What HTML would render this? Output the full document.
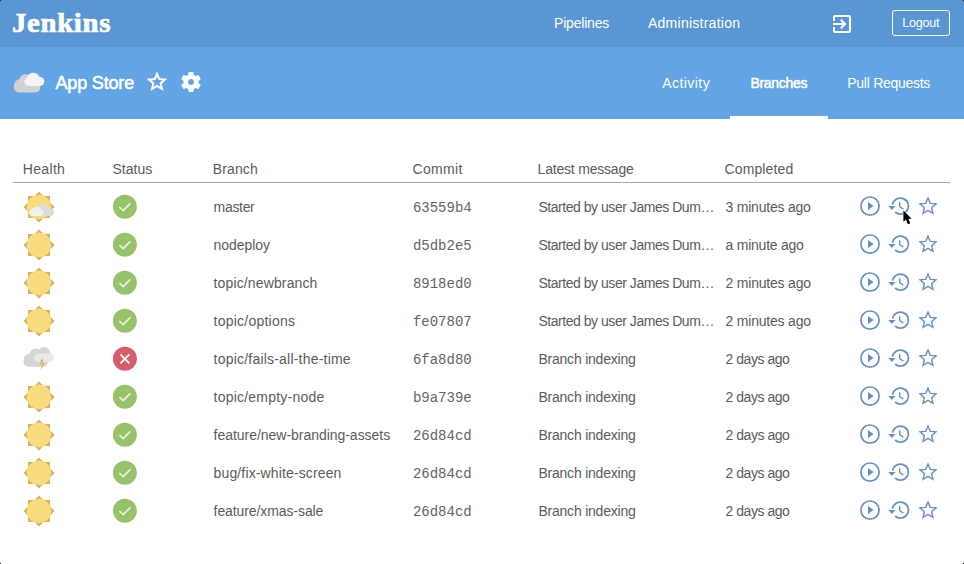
<!DOCTYPE html>
<html><head><meta charset="utf-8">
<style>
html,body{margin:0;padding:0;}
body{width:964px;height:564px;overflow:hidden;position:relative;background:#fff;font-family:"Liberation Sans",sans-serif;}
.t{position:absolute;white-space:nowrap;line-height:1;}
#top{position:absolute;left:0;top:0;width:964px;height:47px;background:#5a96d3;}
#sub{position:absolute;left:0;top:47px;width:964px;height:72px;background:#62a4e4;}
.w{color:#fff;}
.g{color:#5b5b5b;}
.m{color:#646464;}
svg{position:absolute;overflow:visible;}
</style></head><body>
<div id="top"></div>
<div id="sub"></div>
<div style="position:absolute;left:0;top:0;width:2px;height:2px;background:radial-gradient(circle at 100% 100%,rgba(0,0,0,0) 1.5px,#333 2px)"></div><div style="position:absolute;right:0;top:0;width:2px;height:2px;background:radial-gradient(circle at 0 100%,rgba(0,0,0,0) 1.5px,#333 2px)"></div><div style="position:absolute;left:0;bottom:0;width:2px;height:2px;background:radial-gradient(circle at 100% 0,rgba(0,0,0,0) 1.5px,#333 2px)"></div><div style="position:absolute;right:0;bottom:0;width:2px;height:2px;background:radial-gradient(circle at 0 0,rgba(0,0,0,0) 1.5px,#333 2px)"></div>
<div class="t w" style="left:11.80px;top:9.81px;font-size:26.5px;font-family:'Liberation Serif',serif;font-weight:bold;letter-spacing:0.7px;-webkit-text-stroke:0.7px #fff;transform:scaleX(1.08);transform-origin:0 0;">Jenkins</div>
<div class="t w" style="left:554.00px;top:15.95px;font-size:14px;letter-spacing:-0.2px;">Pipelines</div>
<div class="t w" style="left:648.00px;top:15.95px;font-size:14px;letter-spacing:0.25px;">Administration</div>
<div style="position:absolute;left:892px;top:10px;width:56px;height:24px;border:1px solid #fff;border-radius:3px;"></div>
<div class="t w" style="left:902.20px;top:16.62px;font-size:12.5px;letter-spacing:-0.2px;">Logout</div>
<svg style="left:830px;top:12px" width="24" height="24" viewBox="0 0 24 24"><path fill="#fff" d="M10.09 15.59L11.5 17l5-5-5-5-1.41 1.41L12.67 11H3v2h9.67l-2.58 2.59zM19 3H5c-1.11 0-2 .9-2 2v4h2V5h14v14H5v-4H3v4c0 1.1.89 2 2 2h14c1.1 0 2-.9 2-2V5c0-1.1-.9-2-2-2z"/></svg>
<div class="t w" style="left:55.50px;top:74.36px;font-size:18px;-webkit-text-stroke:0.55px #fff;letter-spacing:-0.169px;">App Store</div>
<svg style="left:0;top:0" width="964" height="564"><g transform="translate(157.0 81.8) scale(0.8)"><path d="M0 -10 L2.81 -3.38 L10 -2.76 L4.55 1.97 L6.18 9 L0 5.27 L-6.18 9 L-4.55 1.97 L-10 -2.76 L-2.81 -3.38 Z" fill="none" stroke="#fff" stroke-width="2.5" stroke-linejoin="miter" stroke-miterlimit="3"/></g></svg>
<svg style="left:178.8px;top:69.8px" width="24" height="24" viewBox="0 0 24 24"><path fill="#fff" fill-rule="evenodd" d="M19.43 12.98c.04-.32.07-.64.07-.98s-.03-.66-.07-.98l2.11-1.650c.19-.15.24-.42.12-.64l-2-3.46c-.12-.22-.39-.3-.61-.22l-2.49 1c-.52-.4-1.08-.73-1.69-.98l-.38-2.65C14.46 2.18 14.25 2 14 2h-4c-.25 0-.46.18-.49.42l-.38 2.65c-.61.25-1.17.59-1.690.98l-2.49-1c-.23-.09-.49 0-.61.22l-2 3.46c-.13.22-.07.49.12.64l2.11 1.65c-.04.32-.07.65-.07.98s.03.66.07.98l-2.11 1.65c-.19.15-.24.42-.12.64l2 3.46c.12.22.39.3.61.22l2.49-1c.52.4 1.08.73 1.69.98l.38 2.65c.03.24.24.42.49.42h4c.25 0 .46-.18.49-.42l.38-2.65c.61-.25 1.17-.59 1.69-.98l2.49 1c.23.09.49 0 .61-.22l2-3.46c.12-.22.07-.49-.12-.64l-2.11-1.65zM12 14.95a2.95 2.95 0 1 1 0-5.9a2.95 2.95 0 1 1 0 5.9z"/></svg>
<svg style="left:12px;top:70px" width="34" height="26" viewBox="0 0 34 26">
<g fill="#d2d2d2"><circle cx="8.5" cy="15.5" r="6.5"/><circle cx="13.5" cy="10.5" r="6.2"/><rect x="1.8" y="12" width="26.5" height="10.5" rx="5"/></g>
<g fill="#f4f4f4"><circle cx="21.3" cy="9.6" r="6.8"/><rect x="12.5" y="7" width="19.8" height="9" rx="4.5"/></g>
</svg>
<div class="t w" style="left:662.20px;top:76.15px;font-size:14px;letter-spacing:0.45px;">Activity</div>
<div class="t w" style="left:750.50px;top:76.15px;font-size:14px;-webkit-text-stroke:0.5px #fff;letter-spacing:-0.321px;">Branches</div>
<div class="t w" style="left:847.30px;top:76.15px;font-size:14px;letter-spacing:-0.28px;">Pull Requests</div>
<div style="position:absolute;left:730px;top:116px;width:98px;height:3px;background:#fff;"></div>
<div class="t g" style="left:22.70px;top:162.05px;font-size:14px;letter-spacing:0.35px;">Health</div>
<div class="t g" style="left:112.50px;top:162.05px;font-size:14px;letter-spacing:0px;">Status</div>
<div class="t g" style="left:212.70px;top:162.05px;font-size:14px;letter-spacing:0.15px;">Branch</div>
<div class="t g" style="left:412.60px;top:162.05px;font-size:14px;letter-spacing:0.3px;">Commit</div>
<div class="t g" style="left:537.60px;top:162.05px;font-size:14px;letter-spacing:-0.2px;">Latest message</div>
<div class="t g" style="left:724.50px;top:162.05px;font-size:14px;letter-spacing:0.12px;">Completed</div>
<div style="position:absolute;left:13px;top:181.5px;width:937px;height:1.5px;background:#a9a9a9;"></div>
<svg style="left:0;top:0" width="964" height="564"><g transform="translate(39.0 206.95)"><rect x="-11" y="-11" width="22" height="22" fill="#d7b25a"/><rect x="-11" y="-11" width="22" height="22" fill="#d7b25a" transform="rotate(45)"/><circle r="12.2" fill="#f8dc7d"/></g></svg>
<svg style="left:0;top:0" width="964" height="564"><g transform="translate(39.0 206.95)"><circle cx="5" cy="3.2" r="6" fill="#dedede"/><rect x="-9.5" y="1.2" width="24.5" height="7.8" rx="3.9" fill="#dadada"/><circle cx="-2" cy="4" r="4.5" fill="#efefef"/><rect x="-9.5" y="2" width="14" height="7" rx="3.5" fill="#f1f1f1"/></g></svg>
<svg style="left:0;top:0" width="964" height="564"><circle cx="124.9" cy="206.80" r="12" fill="#96c36a"/><path d="M119.40 207.00l3.8 3.6 7.2-7.2" fill="none" stroke="#f2f8e6" stroke-width="1.5"/></svg>
<div class="t g" style="left:213.60px;top:199.65px;font-size:14px;letter-spacing:-0.320px;">master</div>
<div class="t m" style="left:412.90px;top:201.17px;font-size:14px;font-family:'Liberation Mono',monospace;">63559b4</div>
<div class="t g" style="left:538.40px;top:199.65px;font-size:14px;letter-spacing:-0.460px;">Started by user James Dum…</div>
<div class="t g" style="left:725.50px;top:199.65px;font-size:14px;letter-spacing:-0.213px;">3 minutes ago</div>
<svg style="left:0;top:0" width="964" height="564"><g fill="none" stroke="#6590c4" stroke-width="1.7"><circle cx="870" cy="206.10" r="9.1"/></g><path d="M868 201.90v8.4l5.6-4.2z" fill="#6590c4"/><g transform="translate(900.5 206.10)" fill="none" stroke="#6590c4" stroke-width="1.7"><path d="M-7.9 -1.5A8 8 0 1 1 -5.4 5.9"/><path d="M-0.8 -3.8v4.2l3.6 2.6" stroke-width="1.4"/></g><path d="M888.40 205.90h7l-3.5 4.2z" fill="#6590c4"/></svg>
<svg style="left:0;top:0" width="964" height="564"><g transform="translate(928.0 206.10) scale(0.8)"><path d="M0 -10 L2.81 -3.38 L10 -2.76 L4.55 1.97 L6.18 9 L0 5.27 L-6.18 9 L-4.55 1.97 L-10 -2.76 L-2.81 -3.38 Z" fill="none" stroke="#6590c4" stroke-width="1.75" stroke-linejoin="miter" stroke-miterlimit="3"/></g></svg>
<svg style="left:0;top:0" width="964" height="564"><g transform="translate(39.0 244.95)"><rect x="-11" y="-11" width="22" height="22" fill="#d7b25a"/><rect x="-11" y="-11" width="22" height="22" fill="#d7b25a" transform="rotate(45)"/><circle r="12.2" fill="#f8dc7d"/></g></svg>
<svg style="left:0;top:0" width="964" height="564"><circle cx="124.9" cy="244.80" r="12" fill="#96c36a"/><path d="M119.40 245.00l3.8 3.6 7.2-7.2" fill="none" stroke="#f2f8e6" stroke-width="1.5"/></svg>
<div class="t g" style="left:213.60px;top:237.65px;font-size:14px;letter-spacing:-0.064px;">nodeploy</div>
<div class="t m" style="left:412.90px;top:239.17px;font-size:14px;font-family:'Liberation Mono',monospace;">d5db2e5</div>
<div class="t g" style="left:538.40px;top:237.65px;font-size:14px;letter-spacing:-0.460px;">Started by user James Dum…</div>
<div class="t g" style="left:725.50px;top:237.65px;font-size:14px;letter-spacing:-0.232px;">a minute ago</div>
<svg style="left:0;top:0" width="964" height="564"><g fill="none" stroke="#6590c4" stroke-width="1.7"><circle cx="870" cy="244.10" r="9.1"/></g><path d="M868 239.90v8.4l5.6-4.2z" fill="#6590c4"/><g transform="translate(900.5 244.10)" fill="none" stroke="#6590c4" stroke-width="1.7"><path d="M-7.9 -1.5A8 8 0 1 1 -5.4 5.9"/><path d="M-0.8 -3.8v4.2l3.6 2.6" stroke-width="1.4"/></g><path d="M888.40 243.90h7l-3.5 4.2z" fill="#6590c4"/></svg>
<svg style="left:0;top:0" width="964" height="564"><g transform="translate(928.0 244.10) scale(0.8)"><path d="M0 -10 L2.81 -3.38 L10 -2.76 L4.55 1.97 L6.18 9 L0 5.27 L-6.18 9 L-4.55 1.97 L-10 -2.76 L-2.81 -3.38 Z" fill="none" stroke="#6590c4" stroke-width="1.75" stroke-linejoin="miter" stroke-miterlimit="3"/></g></svg>
<svg style="left:0;top:0" width="964" height="564"><g transform="translate(39.0 282.95)"><rect x="-11" y="-11" width="22" height="22" fill="#d7b25a"/><rect x="-11" y="-11" width="22" height="22" fill="#d7b25a" transform="rotate(45)"/><circle r="12.2" fill="#f8dc7d"/></g></svg>
<svg style="left:0;top:0" width="964" height="564"><circle cx="124.9" cy="282.80" r="12" fill="#96c36a"/><path d="M119.40 283.00l3.8 3.6 7.2-7.2" fill="none" stroke="#f2f8e6" stroke-width="1.5"/></svg>
<div class="t g" style="left:213.60px;top:275.65px;font-size:14px;letter-spacing:0.132px;">topic/newbranch</div>
<div class="t m" style="left:412.90px;top:277.17px;font-size:14px;font-family:'Liberation Mono',monospace;">8918ed0</div>
<div class="t g" style="left:538.40px;top:275.65px;font-size:14px;letter-spacing:-0.460px;">Started by user James Dum…</div>
<div class="t g" style="left:725.50px;top:275.65px;font-size:14px;letter-spacing:-0.204px;">2 minutes ago</div>
<svg style="left:0;top:0" width="964" height="564"><g fill="none" stroke="#6590c4" stroke-width="1.7"><circle cx="870" cy="282.10" r="9.1"/></g><path d="M868 277.90v8.4l5.6-4.2z" fill="#6590c4"/><g transform="translate(900.5 282.10)" fill="none" stroke="#6590c4" stroke-width="1.7"><path d="M-7.9 -1.5A8 8 0 1 1 -5.4 5.9"/><path d="M-0.8 -3.8v4.2l3.6 2.6" stroke-width="1.4"/></g><path d="M888.40 281.90h7l-3.5 4.2z" fill="#6590c4"/></svg>
<svg style="left:0;top:0" width="964" height="564"><g transform="translate(928.0 282.10) scale(0.8)"><path d="M0 -10 L2.81 -3.38 L10 -2.76 L4.55 1.97 L6.18 9 L0 5.27 L-6.18 9 L-4.55 1.97 L-10 -2.76 L-2.81 -3.38 Z" fill="none" stroke="#6590c4" stroke-width="1.75" stroke-linejoin="miter" stroke-miterlimit="3"/></g></svg>
<svg style="left:0;top:0" width="964" height="564"><g transform="translate(39.0 320.95)"><rect x="-11" y="-11" width="22" height="22" fill="#d7b25a"/><rect x="-11" y="-11" width="22" height="22" fill="#d7b25a" transform="rotate(45)"/><circle r="12.2" fill="#f8dc7d"/></g></svg>
<svg style="left:0;top:0" width="964" height="564"><circle cx="124.9" cy="320.80" r="12" fill="#96c36a"/><path d="M119.40 321.00l3.8 3.6 7.2-7.2" fill="none" stroke="#f2f8e6" stroke-width="1.5"/></svg>
<div class="t g" style="left:213.60px;top:313.65px;font-size:14px;letter-spacing:0.233px;">topic/options</div>
<div class="t m" style="left:412.90px;top:315.17px;font-size:14px;font-family:'Liberation Mono',monospace;">fe07807</div>
<div class="t g" style="left:538.40px;top:313.65px;font-size:14px;letter-spacing:-0.460px;">Started by user James Dum…</div>
<div class="t g" style="left:725.50px;top:313.65px;font-size:14px;letter-spacing:-0.204px;">2 minutes ago</div>
<svg style="left:0;top:0" width="964" height="564"><g fill="none" stroke="#6590c4" stroke-width="1.7"><circle cx="870" cy="320.10" r="9.1"/></g><path d="M868 315.90v8.4l5.6-4.2z" fill="#6590c4"/><g transform="translate(900.5 320.10)" fill="none" stroke="#6590c4" stroke-width="1.7"><path d="M-7.9 -1.5A8 8 0 1 1 -5.4 5.9"/><path d="M-0.8 -3.8v4.2l3.6 2.6" stroke-width="1.4"/></g><path d="M888.40 319.90h7l-3.5 4.2z" fill="#6590c4"/></svg>
<svg style="left:0;top:0" width="964" height="564"><g transform="translate(928.0 320.10) scale(0.8)"><path d="M0 -10 L2.81 -3.38 L10 -2.76 L4.55 1.97 L6.18 9 L0 5.27 L-6.18 9 L-4.55 1.97 L-10 -2.76 L-2.81 -3.38 Z" fill="none" stroke="#6590c4" stroke-width="1.75" stroke-linejoin="miter" stroke-miterlimit="3"/></g></svg>
<svg style="left:0;top:0" width="964" height="564"><g transform="translate(39 358.80)"><g fill="#d5d5d5"><circle cx="-8.8" cy="1.3" r="6.6"/><circle cx="-3.5" cy="-4.5" r="5.8"/><circle cx="5" cy="-5.4" r="6.3"/><rect x="-15.4" y="-2" width="24.4" height="9.9" rx="4.9"/></g><rect x="-4.7" y="-5.2" width="19.5" height="8.4" rx="4.2" fill="#e9e9e9"/><path d="M2.5 0.5l-2.2 5.2h2.6l-1.6 5.8 4.6-7.4h-2.6l1.4-3.6z" fill="#e9b54c"/></g></svg>
<svg style="left:0;top:0" width="964" height="564"><circle cx="124.9" cy="358.80" r="12" fill="#d75d67"/><path d="M120.40 354.30l9 9M129.40 354.30l-9 9" fill="none" stroke="#fff" stroke-width="1.7"/></svg>
<div class="t g" style="left:213.60px;top:351.65px;font-size:14px;letter-spacing:0.207px;">topic/fails-all-the-time</div>
<div class="t m" style="left:412.90px;top:353.17px;font-size:14px;font-family:'Liberation Mono',monospace;">6fa8d80</div>
<div class="t g" style="left:538.40px;top:351.65px;font-size:14px;letter-spacing:-0.214px;">Branch indexing</div>
<div class="t g" style="left:725.50px;top:351.65px;font-size:14px;letter-spacing:-0.456px;">2 days ago</div>
<svg style="left:0;top:0" width="964" height="564"><g fill="none" stroke="#6590c4" stroke-width="1.7"><circle cx="870" cy="358.10" r="9.1"/></g><path d="M868 353.90v8.4l5.6-4.2z" fill="#6590c4"/><g transform="translate(900.5 358.10)" fill="none" stroke="#6590c4" stroke-width="1.7"><path d="M-7.9 -1.5A8 8 0 1 1 -5.4 5.9"/><path d="M-0.8 -3.8v4.2l3.6 2.6" stroke-width="1.4"/></g><path d="M888.40 357.90h7l-3.5 4.2z" fill="#6590c4"/></svg>
<svg style="left:0;top:0" width="964" height="564"><g transform="translate(928.0 358.10) scale(0.8)"><path d="M0 -10 L2.81 -3.38 L10 -2.76 L4.55 1.97 L6.18 9 L0 5.27 L-6.18 9 L-4.55 1.97 L-10 -2.76 L-2.81 -3.38 Z" fill="none" stroke="#6590c4" stroke-width="1.75" stroke-linejoin="miter" stroke-miterlimit="3"/></g></svg>
<svg style="left:0;top:0" width="964" height="564"><g transform="translate(39.0 396.95)"><rect x="-11" y="-11" width="22" height="22" fill="#d7b25a"/><rect x="-11" y="-11" width="22" height="22" fill="#d7b25a" transform="rotate(45)"/><circle r="12.2" fill="#f8dc7d"/></g></svg>
<svg style="left:0;top:0" width="964" height="564"><circle cx="124.9" cy="396.80" r="12" fill="#96c36a"/><path d="M119.40 397.00l3.8 3.6 7.2-7.2" fill="none" stroke="#f2f8e6" stroke-width="1.5"/></svg>
<div class="t g" style="left:213.60px;top:389.65px;font-size:14px;letter-spacing:0.213px;">topic/empty-node</div>
<div class="t m" style="left:412.90px;top:391.17px;font-size:14px;font-family:'Liberation Mono',monospace;">b9a739e</div>
<div class="t g" style="left:538.40px;top:389.65px;font-size:14px;letter-spacing:-0.214px;">Branch indexing</div>
<div class="t g" style="left:725.50px;top:389.65px;font-size:14px;letter-spacing:-0.456px;">2 days ago</div>
<svg style="left:0;top:0" width="964" height="564"><g fill="none" stroke="#6590c4" stroke-width="1.7"><circle cx="870" cy="396.10" r="9.1"/></g><path d="M868 391.90v8.4l5.6-4.2z" fill="#6590c4"/><g transform="translate(900.5 396.10)" fill="none" stroke="#6590c4" stroke-width="1.7"><path d="M-7.9 -1.5A8 8 0 1 1 -5.4 5.9"/><path d="M-0.8 -3.8v4.2l3.6 2.6" stroke-width="1.4"/></g><path d="M888.40 395.90h7l-3.5 4.2z" fill="#6590c4"/></svg>
<svg style="left:0;top:0" width="964" height="564"><g transform="translate(928.0 396.10) scale(0.8)"><path d="M0 -10 L2.81 -3.38 L10 -2.76 L4.55 1.97 L6.18 9 L0 5.27 L-6.18 9 L-4.55 1.97 L-10 -2.76 L-2.81 -3.38 Z" fill="none" stroke="#6590c4" stroke-width="1.75" stroke-linejoin="miter" stroke-miterlimit="3"/></g></svg>
<svg style="left:0;top:0" width="964" height="564"><g transform="translate(39.0 434.95)"><rect x="-11" y="-11" width="22" height="22" fill="#d7b25a"/><rect x="-11" y="-11" width="22" height="22" fill="#d7b25a" transform="rotate(45)"/><circle r="12.2" fill="#f8dc7d"/></g></svg>
<svg style="left:0;top:0" width="964" height="564"><circle cx="124.9" cy="434.80" r="12" fill="#96c36a"/><path d="M119.40 435.00l3.8 3.6 7.2-7.2" fill="none" stroke="#f2f8e6" stroke-width="1.5"/></svg>
<div class="t g" style="left:213.60px;top:427.65px;font-size:14px;letter-spacing:-0.033px;">feature/new-branding-assets</div>
<div class="t m" style="left:412.90px;top:429.17px;font-size:14px;font-family:'Liberation Mono',monospace;">26d84cd</div>
<div class="t g" style="left:538.40px;top:427.65px;font-size:14px;letter-spacing:-0.214px;">Branch indexing</div>
<div class="t g" style="left:725.50px;top:427.65px;font-size:14px;letter-spacing:-0.456px;">2 days ago</div>
<svg style="left:0;top:0" width="964" height="564"><g fill="none" stroke="#6590c4" stroke-width="1.7"><circle cx="870" cy="434.10" r="9.1"/></g><path d="M868 429.90v8.4l5.6-4.2z" fill="#6590c4"/><g transform="translate(900.5 434.10)" fill="none" stroke="#6590c4" stroke-width="1.7"><path d="M-7.9 -1.5A8 8 0 1 1 -5.4 5.9"/><path d="M-0.8 -3.8v4.2l3.6 2.6" stroke-width="1.4"/></g><path d="M888.40 433.90h7l-3.5 4.2z" fill="#6590c4"/></svg>
<svg style="left:0;top:0" width="964" height="564"><g transform="translate(928.0 434.10) scale(0.8)"><path d="M0 -10 L2.81 -3.38 L10 -2.76 L4.55 1.97 L6.18 9 L0 5.27 L-6.18 9 L-4.55 1.97 L-10 -2.76 L-2.81 -3.38 Z" fill="none" stroke="#6590c4" stroke-width="1.75" stroke-linejoin="miter" stroke-miterlimit="3"/></g></svg>
<svg style="left:0;top:0" width="964" height="564"><g transform="translate(39.0 472.95)"><rect x="-11" y="-11" width="22" height="22" fill="#d7b25a"/><rect x="-11" y="-11" width="22" height="22" fill="#d7b25a" transform="rotate(45)"/><circle r="12.2" fill="#f8dc7d"/></g></svg>
<svg style="left:0;top:0" width="964" height="564"><circle cx="124.9" cy="472.80" r="12" fill="#96c36a"/><path d="M119.40 473.00l3.8 3.6 7.2-7.2" fill="none" stroke="#f2f8e6" stroke-width="1.5"/></svg>
<div class="t g" style="left:213.60px;top:465.65px;font-size:14px;letter-spacing:0.132px;">bug/fix-white-screen</div>
<div class="t m" style="left:412.90px;top:467.17px;font-size:14px;font-family:'Liberation Mono',monospace;">26d84cd</div>
<div class="t g" style="left:538.40px;top:465.65px;font-size:14px;letter-spacing:-0.214px;">Branch indexing</div>
<div class="t g" style="left:725.50px;top:465.65px;font-size:14px;letter-spacing:-0.456px;">2 days ago</div>
<svg style="left:0;top:0" width="964" height="564"><g fill="none" stroke="#6590c4" stroke-width="1.7"><circle cx="870" cy="472.10" r="9.1"/></g><path d="M868 467.90v8.4l5.6-4.2z" fill="#6590c4"/><g transform="translate(900.5 472.10)" fill="none" stroke="#6590c4" stroke-width="1.7"><path d="M-7.9 -1.5A8 8 0 1 1 -5.4 5.9"/><path d="M-0.8 -3.8v4.2l3.6 2.6" stroke-width="1.4"/></g><path d="M888.40 471.90h7l-3.5 4.2z" fill="#6590c4"/></svg>
<svg style="left:0;top:0" width="964" height="564"><g transform="translate(928.0 472.10) scale(0.8)"><path d="M0 -10 L2.81 -3.38 L10 -2.76 L4.55 1.97 L6.18 9 L0 5.27 L-6.18 9 L-4.55 1.97 L-10 -2.76 L-2.81 -3.38 Z" fill="none" stroke="#6590c4" stroke-width="1.75" stroke-linejoin="miter" stroke-miterlimit="3"/></g></svg>
<svg style="left:0;top:0" width="964" height="564"><g transform="translate(39.0 510.95)"><rect x="-11" y="-11" width="22" height="22" fill="#d7b25a"/><rect x="-11" y="-11" width="22" height="22" fill="#d7b25a" transform="rotate(45)"/><circle r="12.2" fill="#f8dc7d"/></g></svg>
<svg style="left:0;top:0" width="964" height="564"><circle cx="124.9" cy="510.80" r="12" fill="#96c36a"/><path d="M119.40 511.00l3.8 3.6 7.2-7.2" fill="none" stroke="#f2f8e6" stroke-width="1.5"/></svg>
<div class="t g" style="left:213.60px;top:503.65px;font-size:14px;letter-spacing:-0.091px;">feature/xmas-sale</div>
<div class="t m" style="left:412.90px;top:505.17px;font-size:14px;font-family:'Liberation Mono',monospace;">26d84cd</div>
<div class="t g" style="left:538.40px;top:503.65px;font-size:14px;letter-spacing:-0.214px;">Branch indexing</div>
<div class="t g" style="left:725.50px;top:503.65px;font-size:14px;letter-spacing:-0.456px;">2 days ago</div>
<svg style="left:0;top:0" width="964" height="564"><g fill="none" stroke="#6590c4" stroke-width="1.7"><circle cx="870" cy="510.10" r="9.1"/></g><path d="M868 505.90v8.4l5.6-4.2z" fill="#6590c4"/><g transform="translate(900.5 510.10)" fill="none" stroke="#6590c4" stroke-width="1.7"><path d="M-7.9 -1.5A8 8 0 1 1 -5.4 5.9"/><path d="M-0.8 -3.8v4.2l3.6 2.6" stroke-width="1.4"/></g><path d="M888.40 509.90h7l-3.5 4.2z" fill="#6590c4"/></svg>
<svg style="left:0;top:0" width="964" height="564"><g transform="translate(928.0 510.10) scale(0.8)"><path d="M0 -10 L2.81 -3.38 L10 -2.76 L4.55 1.97 L6.18 9 L0 5.27 L-6.18 9 L-4.55 1.97 L-10 -2.76 L-2.81 -3.38 Z" fill="none" stroke="#6590c4" stroke-width="1.75" stroke-linejoin="miter" stroke-miterlimit="3"/></g></svg>
<svg style="left:0;top:0" width="964" height="564"><path d="M903.4 210.6V221.8L906 219.5L907.9 224.3L910.3 223.3L908.4 218.8H911.6Z" fill="#000" stroke="#fff" stroke-width="1" stroke-linejoin="round" paint-order="stroke"/></svg>
</body></html>
